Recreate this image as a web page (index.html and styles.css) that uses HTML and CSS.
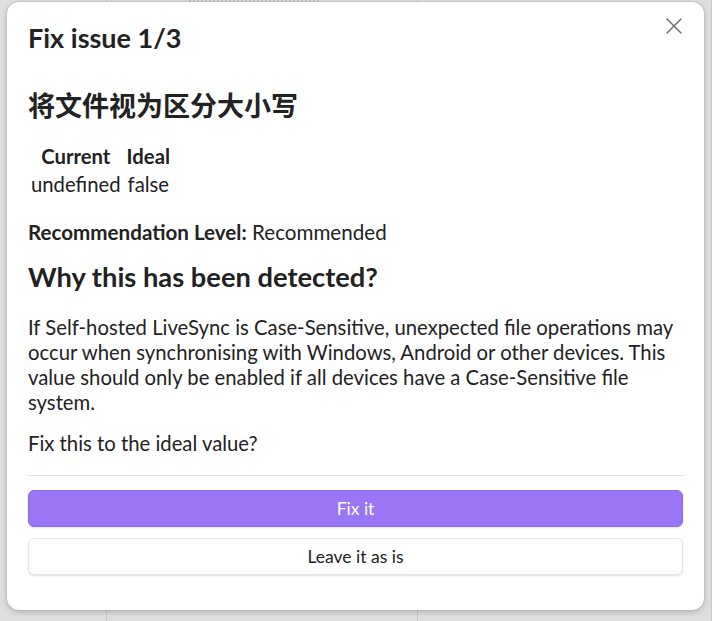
FILE: index.html
```html
<!DOCTYPE html>
<html lang="en">
<head>
  <meta charset="UTF-8" />
  <meta name="viewport" content="width=device-width, initial-scale=1.0"/>
  <title>Fix issue</title>
  <link rel="stylesheet" href="styles.css">
</head>
<body>

  <div class="workspace">
    <div class="pane pane-left"></div>
    <div class="pane pane-mid"><div class="ghost-line"></div></div>
    <div class="pane pane-right"></div>
  </div>

  <div class="modal">
    <button class="modal-close" aria-label="Close">
      <svg viewBox="0 0 24 24" width="24" height="24" fill="none" stroke="currentColor" stroke-width="1.5" stroke-linecap="round">
        <path d="M5 5 L19 19 M19 5 L5 19"/>
      </svg>
    </button>

    <div class="modal-title">Fix issue 1/3</div>

    <div class="modal-content">
      <h2 class="setting-name">将文件视为区分大小写</h2>

      <table class="values">
        <tr><th>Current</th><th>Ideal</th></tr>
        <tr><td>undefined</td><td>false</td></tr>
      </table>

      <p class="level"><b>Recommendation Level:</b> Recommended</p>

      <h3>Why this has been detected?</h3>

      <p class="reason">If Self-hosted LiveSync is Case-Sensitive, unexpected file operations may occur when synchronising with Windows, Android or other devices. This value should only be enabled if all devices have a Case-Sensitive file system.</p>

      <p class="question">Fix this to the ideal value?</p>
    </div>

    <div class="modal-buttons">
      <button class="btn btn-cta">Fix it</button>
      <button class="btn">Leave it as is</button>
    </div>
  </div>

</body>
</html>
```

FILE: styles.css
```css
* {
  box-sizing: border-box;
}

html, body {
  margin: 0;
  padding: 0;
  height: 100%;
  font-family: "Segoe UI", Lato, "Noto Sans CJK SC", sans-serif;
  color: #222;
  background: #dedede;
  overflow: hidden;
}

/* the app behind the dimmed backdrop */
.workspace {
  display: grid;
  grid-template-columns: 107px 311px 1fr;
  height: 100%;
}

.pane {
  border-right: 1px solid #c8c8c8;
}

.ghost-line {
  margin: 0 0 0 82px;
  width: 130px;
  height: 2px;
  border-bottom: 2px dotted #c4c4c4;
}

.modal {
  position: absolute;
  top: 2px;
  left: 7px;
  width: 697px;
  height: 608px;
  background: #fff;
  border-radius: 12px;
  padding: 20px 21px;
  box-shadow: 0 2px 6px rgba(0,0,0,0.18), 0 0 2px rgba(0,0,0,0.2);
  display: flex;
  flex-direction: column;
}

.modal-close {
  position: absolute;
  top: 10px;
  right: 16px;
  display: flex;
  border: none;
  background: none;
  padding: 2px;
  color: #707070;
  cursor: pointer;
}

.modal-title {
  font-size: 27px;
  font-weight: 700;
  line-height: 32px;
  margin-bottom: 34px;
}

.modal-content h2 {
  font-family: "Noto Sans CJK SC", sans-serif;
  font-size: 27px;
  font-weight: 700;
  line-height: 34px;
  margin: 0 0 20px;
}

.values {
  border-collapse: collapse;
  font-size: 20.3px;
  margin-bottom: 21px;
}

.values th,
.values td {
  padding: 1px 3px;
  text-align: center;
  line-height: 26px;
}

.level {
  font-size: 20.6px;
  line-height: 26px;
  margin: 0 0 15px;
}

.modal-content h3 {
  font-size: 27.3px;
  font-weight: 700;
  line-height: 34px;
  margin: 0 0 21px;
}

.reason,
.question {
  font-size: 20.3px;
  line-height: 25px;
  margin: 0 0 16px;
}

.question {
  margin-bottom: 19px;
}

.modal-buttons {
  border-top: 1px solid #e3e3e3;
  padding-top: 14px;
  display: flex;
  flex-direction: column;
  gap: 11px;
}

.btn {
  height: 37px;
  font-family: inherit;
  font-size: 17.5px;
  color: #222;
  background: #fff;
  border: 1px solid #e6e6e6;
  border-radius: 6px;
  box-shadow: 0 1px 2px rgba(0,0,0,0.12);
  cursor: pointer;
}

.btn-cta {
  background: #9a75f5;
  border-color: #8f69ef;
  color: #fff;
}
```
